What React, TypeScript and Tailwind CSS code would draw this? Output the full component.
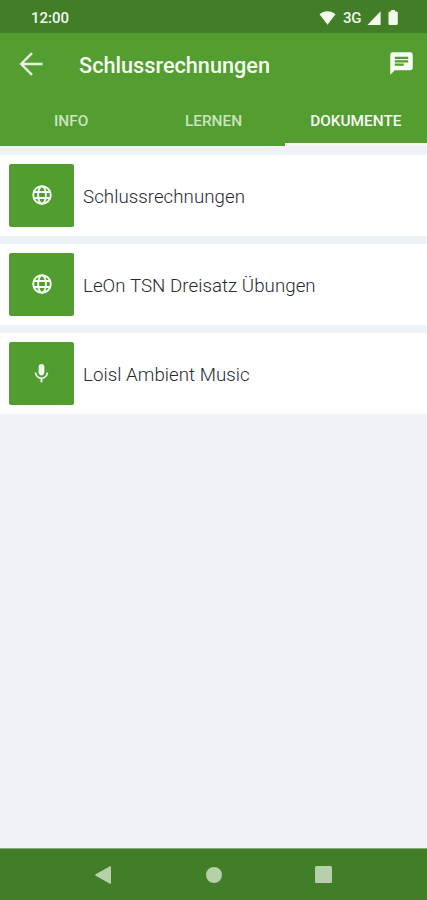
import { useState } from 'react';
import { MdChat, MdMic } from 'react-icons/md';

type Doc = {
  id: number;
  title: string;
  kind: 'web' | 'audio';
};

const TABS = ['INFO', 'LERNEN', 'DOKUMENTE'];

const DOCS: Doc[] = [
  { id: 1, title: 'Schlussrechnungen', kind: 'web' },
  { id: 2, title: 'LeOn TSN Dreisatz Übungen', kind: 'web' },
  { id: 3, title: 'Loisl Ambient Music', kind: 'audio' },
];

function StatusBar() {
  return (
    <div className="flex h-[33px] shrink-0 items-center bg-[#427d28] pt-[2px] pr-[29px] pl-[31px] text-[#f1f8ec]">
      <span className="flex-1 pt-px text-[15px] leading-none font-medium">12:00</span>
      <svg width="17" height="14" viewBox="0 0 17 14" fill="currentColor">
        <path d="M8.5 13.8 0.5 3.3C2.8 1.2 5.5 0.2 8.5 0.2s5.7 1 8 3.1z" />
      </svg>
      <span className="ml-[7px] w-[20px] pt-px text-[15px] leading-none font-medium tracking-[-0.3px]">3G</span>
      <svg className="ml-[4px]" width="14" height="14" viewBox="0 0 14 14" fill="currentColor">
        <path d="M13.6 0.3V14H0.4z" />
      </svg>
      <svg className="ml-[7px]" width="10" height="15" viewBox="0 0 10 15" fill="currentColor">
        <path d="M3 0h4v1.5h1.6q1.2 0 1.2 1.2v11q0 1.3-1.2 1.3H1.7Q0.5 15 0.5 13.7v-11q0-1.2 1.2-1.2H3z" />
      </svg>
    </div>
  );
}

function GlobeIcon() {
  return (
    <svg width="20" height="20" viewBox="0 0 20 20" fill="none" stroke="currentColor" strokeWidth="1.9">
      <circle cx="10" cy="10" r="8.8" />
      <ellipse cx="10" cy="10" rx="3.9" ry="8.8" />
      <path d="M2 7h16M2 13h16" />
    </svg>
  );
}

function NavBar() {
  return (
    <div className="flex h-[52px] shrink-0 items-center border-t border-[#86a977] bg-[#427d28] pl-[95px] text-[#b6d0aa]">
      <svg width="16" height="18" viewBox="0 0 16 18" fill="currentColor">
        <path d="M15 0.2q1 -0.3 1 0.8v16q0 1.1-1 0.8L0.6 9.7q-0.9-0.7 0-1.4z" />
      </svg>
      <span className="ml-[95px] size-4 rounded-full bg-[#b6d0aa]" />
      <span className="ml-[93px] h-[17px] w-[17px] rounded-[1.5px] bg-[#b6d0aa]" />
    </div>
  );
}

export default function App() {
  const [active, setActive] = useState('DOKUMENTE');

  return (
    <div className="flex h-[900px] w-[427px] flex-col overflow-hidden bg-[#eff3f8] font-['Roboto',sans-serif]">
      <StatusBar />

      <header className="flex h-[113px] shrink-0 flex-col bg-[#539d31]">
        <div className="flex h-[62px] items-center pr-[12px] pl-[19px]">
          <button aria-label="Zurück">
            <svg width="24" height="24" viewBox="0 0 24 24" fill="none" stroke="#e6f3df" strokeWidth="2.4">
              <path d="M23.5 12H2.5M13 1.2 2.2 12 13 22.8" />
            </svg>
          </button>
          <h1 className="ml-[36px] flex-1 pt-[3px] text-[21.7px] leading-none font-medium text-[#f6fcf2]">
            Schlussrechnungen
          </h1>
          <MdChat size={27} className="mb-px text-[#f8fdf5]" />
        </div>
        <nav className="grid flex-1 grid-cols-3">
          {TABS.map(tab => (
            <button
              key={tab}
              onClick={() => setActive(tab)}
              className={
                tab === active
                  ? 'flex h-[51px] items-center justify-center border-b-[3px] border-[#f6faf5] pt-[6px] text-[15.4px] leading-none font-medium text-[#f6fcf2]'
                  : 'flex h-[51px] items-center justify-center border-b-[3px] border-transparent pt-[6px] text-[15.4px] leading-none font-medium text-[#cbe4bd]'
              }
            >
              {tab}
            </button>
          ))}
        </nav>
      </header>

      <main className="flex flex-1 flex-col gap-[8.5px] pt-[9px]">
        {DOCS.map(doc => (
          <div key={doc.id} className="flex h-[80.5px] items-center bg-white pl-[9px]">
            <div className="flex h-[63px] w-[65px] items-center justify-center rounded-[2px] bg-[#529d30] text-[#f4fbf0]">
              {doc.kind === 'web' ? <GlobeIcon /> : <MdMic size={23} />}
            </div>
            <span className="ml-[9px] pt-[5px] text-[18.7px] leading-none font-light tracking-[0.05px] text-[#26292f]">
              {doc.title}
            </span>
          </div>
        ))}
      </main>

      <NavBar />
    </div>
  );
}
